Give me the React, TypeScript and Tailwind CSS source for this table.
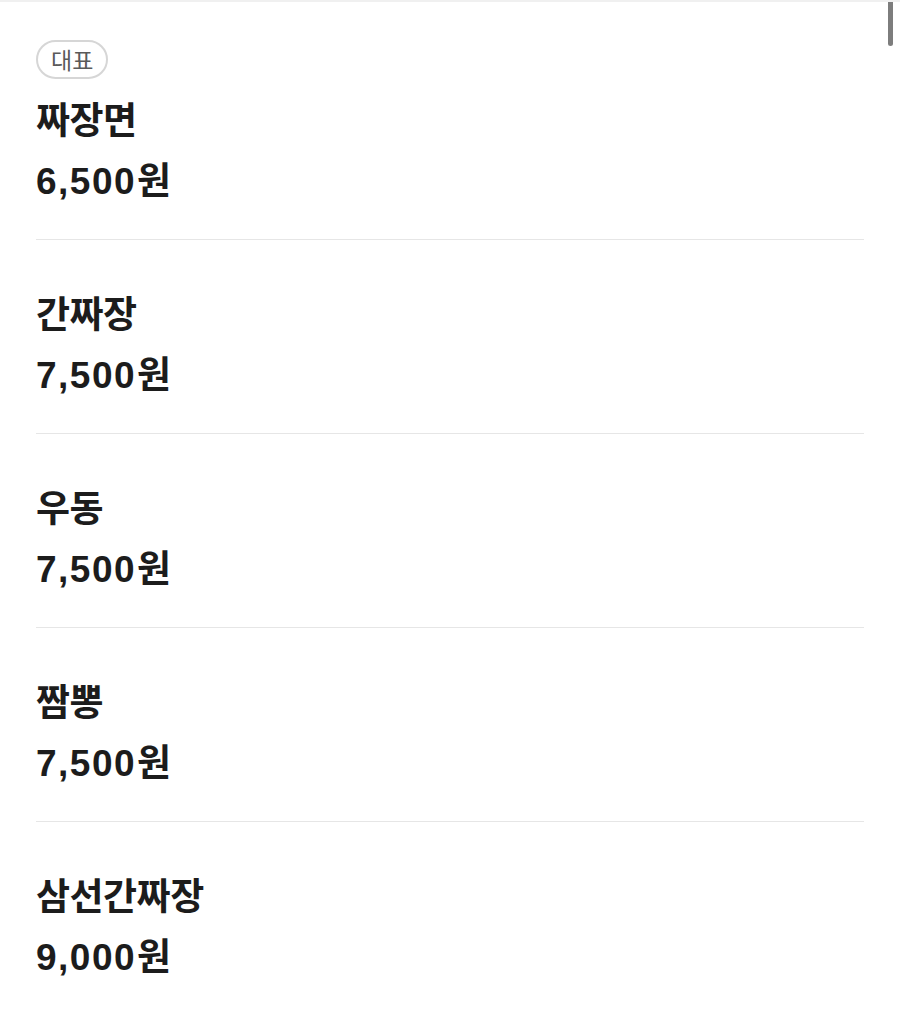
const menus = [
  { name: "짜장면", price: "6,500", featured: true },
  { name: "간짜장", price: "7,500" },
  { name: "우동", price: "7,500" },
  { name: "짬뽕", price: "7,500" },
  { name: "삼선간짜장", price: "9,000" },
];

export default function App() {
  return (
    <div
      className="relative h-[1012px] overflow-hidden border-t-2 border-[#f0f0f0] bg-white text-[#1c1c1c]"
      style={{ fontFamily: '"Noto Sans CJK KR", "Noto Sans", sans-serif' }}
    >
      {/* scroll thumb */}
      <div className="absolute right-[7px] top-0 h-[44px] w-[5px] rounded-b-full bg-[#7d7d7d]" />

      <ul className="px-9">
        {menus.map((menu, i) => (
          <li
            key={menu.name}
            className={
              "flex flex-col items-start pb-[33px] " +
              (i === 0 ? "pt-[38px]" : "border-t border-[#e6e6e6] pt-[48px]")
            }
          >
            {menu.featured ? (
              <span className="mb-[15px] flex h-[39px] items-center rounded-full border-2 border-[#d6d6d6] px-[13px] text-[23px] leading-none text-[#5a5a5a]">
                대표
              </span>
            ) : null}
            <p className="text-[37px] font-semibold leading-[48px] tracking-[-0.5px]">{menu.name}</p>
            <p className="mt-[12px] text-[37px] font-bold leading-[48px]">
              <span className="font-['Liberation_Sans'] tracking-[1.5px]">{menu.price}</span>
              <span className="ml-[1px]">원</span>
            </p>
          </li>
        ))}
      </ul>
    </div>
  );
}
